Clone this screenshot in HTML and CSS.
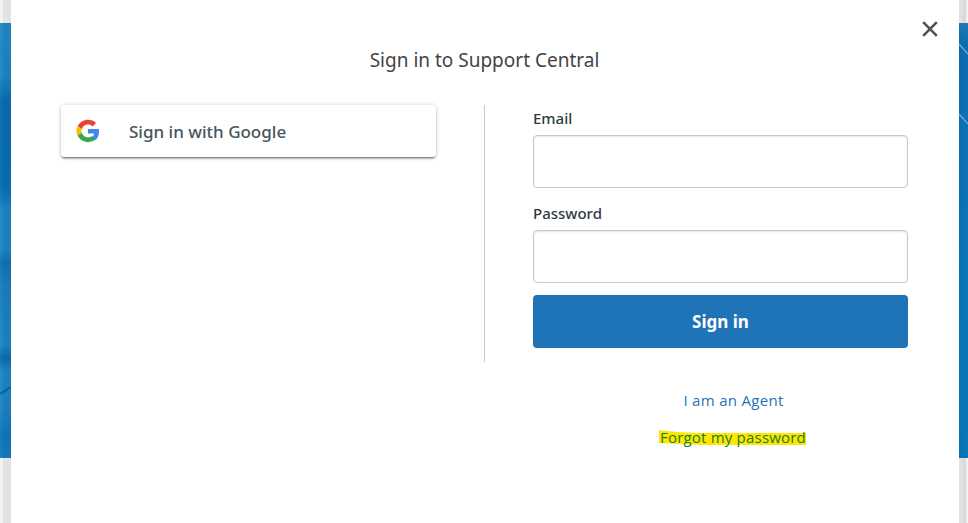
FILE: index.html
```html
<!DOCTYPE html>
<html lang="en">
<head>
<meta charset="utf-8">
<title>Sign in to Support Central</title>
<link rel="stylesheet" href="styles.css">
</head>
<body>
<div class="page">
  <div class="backdrop backdrop-left">
    <svg class="banner" viewBox="0 0 11 435" preserveAspectRatio="none" aria-hidden="true">
      <defs>
        <linearGradient id="bl" x1="0" y1="0" x2="0" y2="1">
          <stop offset="0" stop-color="#238bc8"/><stop offset=".12" stop-color="#218bc6"/>
          <stop offset=".18" stop-color="#0b6fb2"/><stop offset=".38" stop-color="#0b72b6"/>
          <stop offset=".43" stop-color="#218ac8"/><stop offset=".52" stop-color="#218bc8"/>
          <stop offset=".55" stop-color="#1675b5"/><stop offset=".60" stop-color="#1c82c1"/>
          <stop offset=".74" stop-color="#218ac8"/><stop offset=".77" stop-color="#0d70ad"/>
          <stop offset=".80" stop-color="#218bc8"/><stop offset=".89" stop-color="#2187c3"/>
          <stop offset=".95" stop-color="#107abf"/><stop offset="1" stop-color="#1b80c1"/>
        </linearGradient>
      </defs>
      <rect width="11" height="435" fill="url(#bl)"/>
      <path d="M0 371l11-7" stroke="#0a67a4" stroke-width="2"/>
    </svg>
    <span class="shade"></span>
  </div>
  <main class="dialog">
    <button class="close" aria-label="Close">
      <svg width="16" height="16" viewBox="0 0 16 16"><path d="M1.200 1.200l13.600 13.600M14.800 1.200l-13.600 13.600" stroke="#49545c" stroke-width="2.600" fill="none"/></svg>
    </button>
    <h1 class="title">Sign in to Support Central</h1>
    <div class="columns">
      <section class="social">
        <a class="google">
          <svg width="24" height="24" viewBox="0 0 48 48" aria-hidden="true">
            <path fill="#EA4335" d="M24 11.200c3.500 0 6.700 1.200 9.200 3.600l6.900-6.900C35.900 4 30.400 1.700 24 1.700 15 1.700 7.200 6.900 3.400 14.400l8 6.200C13.200 15.200 18.100 11.200 24 11.200z"/>
            <path fill="#4285F4" d="M46 24.500c0-1.600-.2-3.100-.4-4.500H24v9h12.500c-.6 3-2.300 5.500-4.800 7.200l7.700 6C44 38 46 31.900 46 24.500z"/>
            <path fill="#FBBC05" d="M11.400 28.200a14 14 0 0 1 0-8.400l-8-5.900a22.500 22.500 0 0 0 0 20.200z"/>
            <path fill="#34A853" d="M24 46.300c6.300 0 11.600-2.100 15.400-5.600l-7.700-6c-2.100 1.400-4.700 2.200-7.700 2.200-5.900 0-10.800-4-12.600-9.300l-8 6.100C7.200 41.300 15 46.300 24 46.300z"/>
          </svg>
          <span>Sign in with Google</span>
        </a>
      </section>
      <form class="login">
        <label for="email">Email</label>
        <input id="email" type="email">
        <label for="password">Password</label>
        <input id="password" type="password">
        <button class="submit" type="button">Sign in</button>
      </form>
    </div>
    <nav class="links">
      <a class="agent">I am an Agent</a>
      <a class="forgot">
        <svg class="marker" viewBox="0 0 147 16" aria-hidden="true"><path fill="#ffe600" d="M0 0c14 2 28 3 48 3h99v12H48l-48-2z"/></svg>
        <span>Forgot my password</span>
      </a>
    </nav>
  </main>
  <div class="backdrop backdrop-right">
    <svg class="banner" viewBox="0 0 9 435" preserveAspectRatio="none" aria-hidden="true">
      <defs><linearGradient id="br" x1="0" y1="0" x2="0" y2="1">
        <stop offset="0" stop-color="#2678b2"/><stop offset=".05" stop-color="#0969aa"/>
        <stop offset=".24" stop-color="#0c6eae"/><stop offset=".6" stop-color="#0874b4"/><stop offset="1" stop-color="#0775b3"/>
      </linearGradient></defs>
      <rect width="9" height="435" fill="url(#br)"/>
      <path d="M0 21l9 10M0 91l9 10" stroke="#7caed5" stroke-width="1.400"/>
    </svg>
    <span class="shade"></span>
  </div>
</div>
</body>
</html>
```
FILE: styles.css
```css
* { box-sizing: border-box; }
body { margin: 0; background: #fff; font-family: "Noto Sans", "Open Sans", sans-serif; color: #2f3941; }
.page { display: grid; grid-template-columns: 11px 948px 9px; height: 523px; overflow: hidden; }
.backdrop { position: relative; padding: 23px 0 65px; background: linear-gradient(90deg, #f2f2f2 3px, #e3e3e3 3px); }
.backdrop-right { background: linear-gradient(90deg, #e1e1e1 4px, #dadada 4px 7px, #f1f1f1 7px); }
.banner { display: block; width: 100%; height: 435px; }
.shade { position: absolute; top: 23px; bottom: 65px; left: 3px; right: 0; background: rgba(0, 65, 100, .13); }
.backdrop-right .shade { left: 4px; background: rgba(20, 125, 205, .2); }
.dialog { position: relative; padding: 45px 51px 0 50px; background: #fff; border-radius: 3px; }
.close { position: absolute; top: 21px; left: 911px; width: 16px; height: 16px; padding: 0; border: 0; background: none; }
.close svg { display: block; }
.title { margin: 0; height: 60px; line-height: 30px; font-size: 19px; font-weight: 400; text-align: center; color: #444; white-space: nowrap; }
.columns { display: grid; grid-template-columns: 424px 423px; height: 257px; }
.social { border-right: 1px solid #c8c8c8; }
.google { display: flex; align-items: center; gap: 29px; width: 375px; height: 52px; padding-left: 15px; border-radius: 3px; background: #fff; box-shadow: 0 0 4px rgba(0,0,0,.16), 0 2px 2px -1px rgba(0,0,0,.5), 0 2px 3px rgba(0,0,0,.1); color: #49545c; font-size: 17px; font-weight: 500; white-space: nowrap; }
.login { display: flex; flex-direction: column; padding-left: 48px; }
.login label { height: 30px; line-height: 27px; font-size: 15px; font-weight: 500; }
.login input { width: 375px; height: 53px; margin: 0 0 12px; border: 1px solid #c8c8c8; border-radius: 4px; background: #fff; box-shadow: inset 0 1px 2px rgba(0,0,0,.1); }
.submit { flex: none; width: 375px; height: 53px; padding: 0; border: 0; border-radius: 4px; background: #1f73b7; color: #fff; font: 700 17px/53px "Noto Sans", "Open Sans", sans-serif; }
.links { display: flex; flex-direction: column; align-items: center; gap: 13px; width: 375px; margin: 26px 0 0 472px; font-family: "Open Sans", "Noto Sans", sans-serif; font-size: 15px; line-height: 24px; color: #1f73b7; white-space: nowrap; }
.agent { margin-left: 26px; letter-spacing: .3px; }
.forgot { position: relative; margin-left: 25px; color: #187d26; letter-spacing: .2px; }
.marker { position: absolute; left: -1px; top: 5px; width: 147px; height: 16px; }
.forgot span { position: relative; }
```
